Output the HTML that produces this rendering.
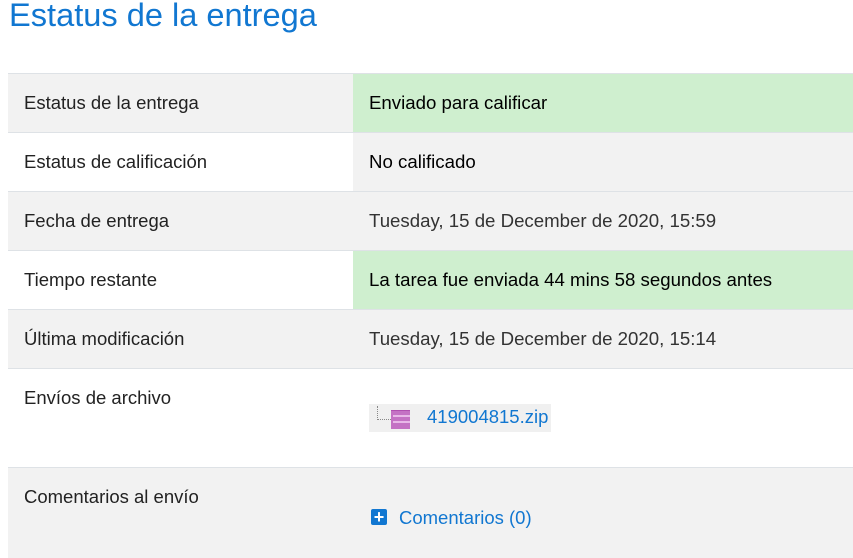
<!DOCTYPE html>
<html><head><meta charset="utf-8"><style>
body{margin:0;width:853px;height:556px;overflow:hidden;background:#fff;font-family:"Liberation Sans",sans-serif;}
h2{position:absolute;left:9px;top:-5px;margin:0;font-weight:normal;font-size:32.6px;color:#1177d1;line-height:40px;}
table{position:absolute;left:8px;top:73px;width:845px;border-collapse:collapse;font-size:18.5px;color:#222;}
td{border-top:1px solid #dee2e6;padding:0 0 0 16px;height:58px;vertical-align:top;line-height:21px;}
td .t{padding-top:18px}
td.l{width:329px}
td+td{font-size:18.65px}
.g{background:#f2f2f2}.gr{background:#cfefcf;color:#000}
.d{color:#333}
a{color:#1177d1;text-decoration:none}
</style></head><body>
<h2>Estatus de la entrega</h2>
<table>
<tr><td class="l g"><div class="t">Estatus de la entrega</div></td><td class="gr"><div class="t">Enviado para calificar</div></td></tr>
<tr><td class="l"><div class="t">Estatus de calificación</div></td><td class="g"><div class="t" style="color:#000">No calificado</div></td></tr>
<tr><td class="l g"><div class="t">Fecha de entrega</div></td><td class="g d"><div class="t">Tuesday, 15 de December de 2020, 15:59</div></td></tr>
<tr><td class="l"><div class="t">Tiempo restante</div></td><td class="gr"><div class="t">La tarea fue enviada 44 mins 58 segundos antes</div></td></tr>
<tr><td class="l g"><div class="t">Última modificación</div></td><td class="g d"><div class="t">Tuesday, 15 de December de 2020, 15:14</div></td></tr>
<tr><td class="l" style="height:98px"><div class="t">Envíos de archivo</div></td><td><div style="margin-top:35px;display:inline-block;background:#f0f0f0;height:28px;width:182px;position:relative">
<div style="position:absolute;left:8px;top:2px;width:13px;height:13px;border-left:1px dotted #888;border-bottom:1px dotted #888"></div>
<div style="position:absolute;left:22px;top:6px;width:19px;height:18px;background:#c472c4;border-top:1px solid #b050b0"></div>
<div style="position:absolute;left:24px;top:11px;width:17px;height:2px;background:#e8b8e8"></div>
<div style="position:absolute;left:24px;top:17px;width:17px;height:2px;background:#e8b8e8"></div>
<a style="position:absolute;left:58px;top:2px;font-size:18.5px" href="#">419004815.zip</a></div></td></tr>
<tr><td class="l g" style="height:90px"><div class="t">Comentarios al envío</div></td><td class="g"><div style="margin-top:39px;position:relative;height:21px">
<span style="position:absolute;left:2px;top:2px;width:16px;height:16px;background:#1177d1;border-radius:2px;color:#fff;font-weight:bold;font-size:18px;line-height:16px;text-align:center">+</span>
<a style="position:absolute;left:30px;top:0;font-size:18.5px" href="#">Comentarios (0)</a></div></td></tr>
</table>
</body></html>
